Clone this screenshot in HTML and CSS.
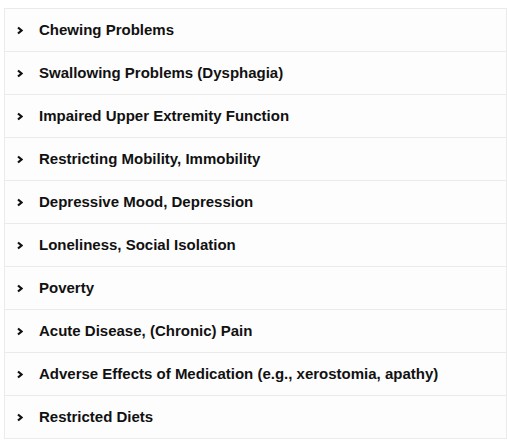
FILE: index.html
```html
<!DOCTYPE html>
<html lang="en">
<head>
    <meta charset="UTF-8">
    <title>Risk Factors</title>
    <link rel="stylesheet" href="styles.css">
</head>
<body>
    <div class="accordion">
        <div class="item"><svg class="chevron" viewBox="0 0 6 8"><path d="M1 1 L4.5 4 L1 7"/></svg><span class="label">Chewing Problems</span></div>
        <div class="item"><svg class="chevron" viewBox="0 0 6 8"><path d="M1 1 L4.5 4 L1 7"/></svg><span class="label">Swallowing Problems (Dysphagia)</span></div>
        <div class="item"><svg class="chevron" viewBox="0 0 6 8"><path d="M1 1 L4.5 4 L1 7"/></svg><span class="label">Impaired Upper Extremity Function</span></div>
        <div class="item"><svg class="chevron" viewBox="0 0 6 8"><path d="M1 1 L4.5 4 L1 7"/></svg><span class="label">Restricting Mobility, Immobility</span></div>
        <div class="item"><svg class="chevron" viewBox="0 0 6 8"><path d="M1 1 L4.5 4 L1 7"/></svg><span class="label">Depressive Mood, Depression</span></div>
        <div class="item"><svg class="chevron" viewBox="0 0 6 8"><path d="M1 1 L4.5 4 L1 7"/></svg><span class="label">Loneliness, Social Isolation</span></div>
        <div class="item"><svg class="chevron" viewBox="0 0 6 8"><path d="M1 1 L4.5 4 L1 7"/></svg><span class="label">Poverty</span></div>
        <div class="item"><svg class="chevron" viewBox="0 0 6 8"><path d="M1 1 L4.5 4 L1 7"/></svg><span class="label">Acute Disease, (Chronic) Pain</span></div>
        <div class="item"><svg class="chevron" viewBox="0 0 6 8"><path d="M1 1 L4.5 4 L1 7"/></svg><span class="label">Adverse Effects of Medication (e.g., xerostomia, apathy)</span></div>
        <div class="item"><svg class="chevron" viewBox="0 0 6 8"><path d="M1 1 L4.5 4 L1 7"/></svg><span class="label">Restricted Diets</span></div>
    </div>
</body>
</html>
```

FILE: styles.css
```css
body {
    margin: 0;
    padding: 8px 0 0 4px;
    background: #ffffff;
    font-family: 'Liberation Sans', Arial, sans-serif;
    color: #111111;
}

.accordion {
    border: 1px solid #ebebeb;
    background: #fdfdfd;
}

.item {
    display: flex;
    align-items: center;
    height: 42px;
    padding-left: 12px;
    border-top: 1px solid #ebebeb;
}

.item:first-child {
    border-top: none;
}

.chevron {
    width: 6px;
    height: 9px;
    margin-right: 16px;
    fill: none;
    stroke: #111111;
    stroke-width: 2.2;
}

.label {
    font-size: 15px;
    font-weight: bold;
    margin-top: -2px;
}
```
